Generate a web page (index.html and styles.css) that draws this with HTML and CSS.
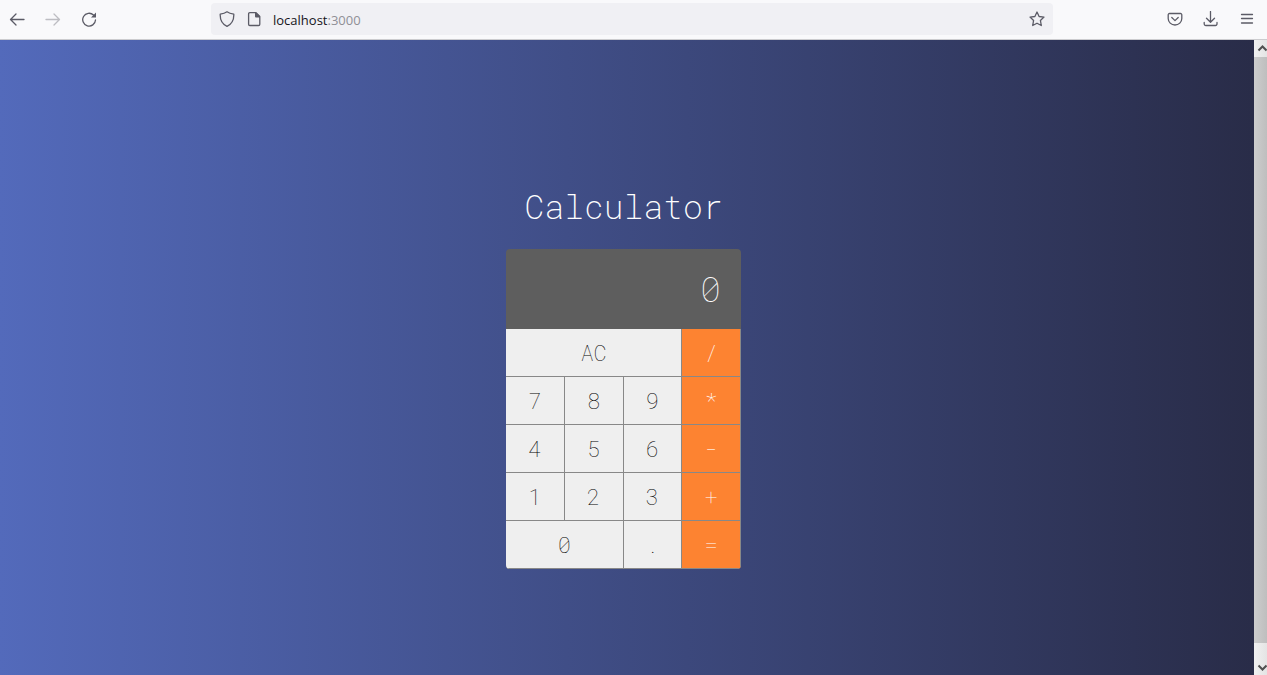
FILE: index.html
```html
<!DOCTYPE html>
<html lang="en">
<head>
<meta charset="utf-8">
<meta name="viewport" content="width=device-width, initial-scale=1">
<title>Calculator</title>
<link rel="stylesheet" href="styles.css">
</head>
<body>
<div class="browser">
  <header class="toolbar">
    <nav class="nav" aria-label="History">
      <button class="tool" aria-label="Back"><svg viewBox="0 0 16 16"><path d="M15 8.500H1.500M7 3L1.500 8.500 7 14"/></svg></button>
      <button class="tool tool-off" aria-label="Forward" disabled><svg viewBox="0 0 16 16"><path d="M1 8.500h13.500M9 3l5.500 5.500L9 14"/></svg></button>
      <button class="tool" aria-label="Reload"><svg viewBox="0 0 16 16"><path d="M12.500 4A6.400 6.400 0 1 0 14.500 9"/><path class="solid" d="M15 1.500v5H10z"/></svg></button>
    </nav>
    <div class="address">
      <svg class="icon" viewBox="0 0 16 16"><path d="M8 .8C6 2.300 3.500 2.900 1.200 3.200 1 8.500 3 13 8 15.300c5-2.300 7-6.800 6.800-12.100C12.500 2.900 10 2.300 8 .8z"/></svg>
      <svg class="icon" viewBox="0 0 16 16"><path d="M10 1.700H3.800a1.200 1.200 0 0 0-1.200 1.200v10.400a1.200 1.200 0 0 0 1.200 1.200h8.800a1.200 1.200 0 0 0 1.200-1.200V5.500z"/><path class="solid" d="M9 1.500h1.200L14 5.200v1.300H10a1 1 0 0 1-1-1z"/></svg>
      <span class="url">localhost<span class="port">:3000</span></span>
      <button class="tool" aria-label="Bookmark"><svg viewBox="0 0 16 16"><path d="M8 1l2.100 4.500 4.900.6-3.600 3.300.9 5.100L8 12.200l-4.300 2.300.9-5.100L1 6.100l4.900-.6z"/></svg></button>
    </div>
    <div class="actions">
      <button class="tool" aria-label="Save to Pocket"><svg viewBox="0 0 16 16"><path d="M2.500 2.500h11a1.300 1.300 0 0 1 1.300 1.300V7.500a6.800 6.500 0 0 1-13.600 0V3.800A1.300 1.300 0 0 1 2.500 2.500zM4.800 6.500L8 9.600l3.200-3.100"/></svg></button>
      <button class="tool" aria-label="Downloads"><svg viewBox="0 0 16 16"><path d="M7.500 .5v10.500M3.500 7.200L7.500 11.200 11.500 7.200M1.200 11.500v1.500a1.500 1.500 0 0 0 1.500 1.500h9.800a1.500 1.500 0 0 0 1.500-1.500v-1.500"/></svg></button>
      <button class="tool" aria-label="Menu"><svg viewBox="0 0 16 16"><path d="M2.500 3.500h11M2.500 7.500h11M2.500 12h11"/></svg></button>
    </div>
  </header>
  <div class="view">
    <main class="page">
      <h1 class="title">Calculator</h1>
      <section class="calculator" aria-label="Calculator">
        <output class="display">0</output>
        <div class="keys">
          <button class="key wide-3">AC</button><button class="key op">/</button>
          <button class="key">7</button><button class="key">8</button><button class="key">9</button><button class="key op">*</button>
          <button class="key">4</button><button class="key">5</button><button class="key">6</button><button class="key op">-</button>
          <button class="key">1</button><button class="key">2</button><button class="key">3</button><button class="key op">+</button>
          <button class="key wide-2">0</button><button class="key">.</button><button class="key op">=</button>
        </div>
      </section>
    </main>
    <div class="scrollbar" aria-hidden="true">
      <svg class="arrow" viewBox="0 0 13 17"><path d="M4.500 10.500l4-4 4 4"/></svg>
      <div class="thumb"></div>
      <svg class="arrow" viewBox="0 0 13 17"><path d="M4.500 7.500l4 4 4-4"/></svg>
    </div>
  </div>
</div>
</body>
</html>
```
FILE: styles.css
```css
* {
  box-sizing: border-box;
}

body {
  margin: 0;
}

button {
  border: 0;
  padding: 0;
  background: none;
  color: inherit;
}

svg {
  display: block;
  fill: none;
  stroke: currentColor;
  stroke-width: 1.3;
  stroke-linecap: round;
  stroke-linejoin: round;
}

.solid {
  fill: currentColor;
  stroke: none;
}

.browser {
  display: flex;
  flex-direction: column;
  min-height: 100vh;
}

.toolbar {
  display: flex;
  align-items: center;
  height: 40px;
  padding: 0 12px 2px 9px;
  background: #f9f9fb;
  border-bottom: 1px solid #cccccf;
  color: #5b5b66;
}

.nav,
.actions {
  display: flex;
  gap: 20px;
}

.tool,
.icon {
  flex: none;
  width: 16px;
  height: 16px;
}

.nav .tool-off {
  color: #bdbdc2;
}

.address {
  display: flex;
  flex: 1;
  align-items: center;
  gap: 11px;
  height: 32px;
  margin: 0 114px;
  padding: 0 8px;
  border-radius: 4px;
  background: #f0f0f4;
}

.url {
  flex: 1;
  padding-top: 2px;
  color: #15141a;
  font: 13px/20px "Open Sans", sans-serif;
}

.port {
  color: #8f8f96;
}

.view {
  display: flex;
  flex: 1;
}

.page {
  display: flex;
  flex: 1;
  flex-direction: column;
  align-items: center;
  padding: 144px 7px 40px 0;
  background: linear-gradient(90deg, #536abb, #292c48);
}

.title {
  margin: 0 0 21px;
  color: #fff;
  font: 200 33px/44px "Roboto Mono", "Liberation Mono", monospace;
}

.calculator {
  width: 235px;
  overflow: hidden;
  border-radius: 4px;
  background: #5e5e5e;
}

.display {
  display: block;
  padding: 15px 20px 17px;
  color: #fff;
  font: 100 35px/48px "Roboto Mono", "Liberation Mono", monospace;
  text-align: right;
}

.keys {
  display: grid;
  grid-template-columns: repeat(4, 1fr);
  grid-auto-rows: 48px;
}

.key {
  border: solid #888;
  border-width: 0 1px 1px 0;
  background: #efefef;
  color: #000;
  font: 100 22px/32px "Roboto Mono", "Liberation Mono", monospace;
}

.wide-2 {
  grid-column: span 2;
}

.wide-3 {
  grid-column: span 3;
}

.op {
  background: #fd8331;
  color: #fff;
}

.scrollbar {
  display: flex;
  flex-direction: column;
  width: 13px;
  background: linear-gradient(90deg, #f1f1f1, #e4e4e4);
  color: #505050;
}

.arrow {
  width: 13px;
  height: 17px;
  stroke-width: 2;
  stroke-linecap: butt;
  stroke-linejoin: miter;
}

.thumb {
  flex: 1;
  margin-bottom: 15px;
  background: linear-gradient(90deg, #cdcdcd, #bebebe);
}
```
